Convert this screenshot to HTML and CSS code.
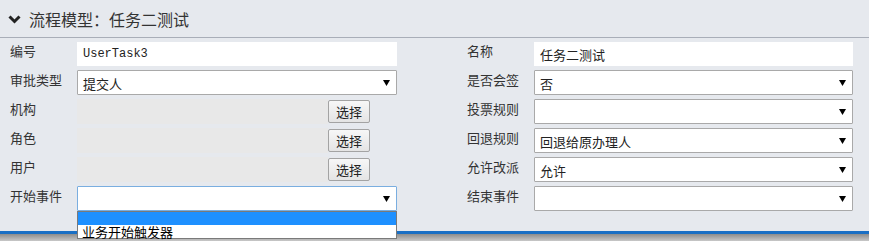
FILE: index.html
```html
<!DOCTYPE html>
<html lang="zh">
<head>
<meta charset="utf-8">
<link rel="stylesheet" href="styles.css">
</head>
<body>
<div class="panel">
  <div class="header">
    <svg class="chev" width="13" height="9" viewBox="0 0 13 9"><polyline points="1.5,1.5 6.5,6.5 11.5,1.5" fill="none" stroke="#222" stroke-width="3"/></svg>
    <span class="title">流程模型：任务二测试</span>
  </div>
  <div class="form">
    <div class="label">编号</div>
    <div class="input mono first">UserTask3</div>
    <div class="label right">名称</div>
    <div class="input first">任务二测试</div>

    <div class="label">审批类型</div>
    <div class="select"><span>提交人</span><svg class="arr" width="7" height="6" viewBox="0 0 7 6"><polygon points="0,0 7,0 3.5,6" fill="#000"/></svg></div>
    <div class="label right">是否会签</div>
    <div class="select"><span>否</span><svg class="arr" width="7" height="6" viewBox="0 0 7 6"><polygon points="0,0 7,0 3.5,6" fill="#000"/></svg></div>

    <div class="label">机构</div>
    <div class="pick"><div class="ro"></div><div class="btn">选择</div></div>
    <div class="label right">投票规则</div>
    <div class="select"><span></span><svg class="arr" width="7" height="6" viewBox="0 0 7 6"><polygon points="0,0 7,0 3.5,6" fill="#000"/></svg></div>

    <div class="label">角色</div>
    <div class="pick"><div class="ro"></div><div class="btn">选择</div></div>
    <div class="label right">回退规则</div>
    <div class="select"><span>回退给原办理人</span><svg class="arr" width="7" height="6" viewBox="0 0 7 6"><polygon points="0,0 7,0 3.5,6" fill="#000"/></svg></div>

    <div class="label">用户</div>
    <div class="pick"><div class="ro"></div><div class="btn">选择</div></div>
    <div class="label right">允许改派</div>
    <div class="select"><span>允许</span><svg class="arr" width="7" height="6" viewBox="0 0 7 6"><polygon points="0,0 7,0 3.5,6" fill="#000"/></svg></div>

    <div class="label">开始事件</div>
    <div class="select focus"><span></span><svg class="arr" width="7" height="6" viewBox="0 0 7 6"><polygon points="0,0 7,0 3.5,6" fill="#000"/></svg>
      <div class="dropdown">
        <div class="opt hl"></div>
        <div class="opt">业务开始触发器</div>
      </div>
    </div>
    <div class="label right">结束事件</div>
    <div class="select"><span></span><svg class="arr" width="7" height="6" viewBox="0 0 7 6"><polygon points="0,0 7,0 3.5,6" fill="#000"/></svg></div>
  </div>
  <div class="footer"></div>
</div>
</body>
</html>
```
FILE: styles.css
```css
* { box-sizing: border-box; }
html, body { margin: 0; padding: 0; }
body {
  width: 869px;
  height: 241px;
  overflow: hidden;
  background: #e6e9ee;
  font-family: "Noto Sans CJK SC", "Noto Sans", sans-serif;
  color: #222;
}
.panel { background: #e6e9ee; }
.header {
  height: 38px;
  border-bottom: 1px solid #a9aeb8;
  display: flex;
  align-items: center;
  padding-left: 8px;
}
.chev { margin-right: 8px; margin-top: 1px; }
.title { font-size: 16px; line-height: 20px; color: #333; }
.form {
  display: grid;
  grid-template-columns: 77px 320px 137px 319px;
  grid-auto-rows: 25px;
  row-gap: 4px;
  padding-top: 3px;
  height: 193px;
}
.label {
  font-size: 13px;
  line-height: 18px;
  padding-left: 10px;
  color: #333;
  padding-top: 1px;
}
.label.right { padding-left: 70px; }
.first { margin-top: 1px; }
.input {
  background: #fff;
  border: 1px solid #fff;
  font-size: 13px;
  line-height: 23px;
  padding-left: 5px;
  color: #222;
}
.mono { font-family: "Liberation Mono", "DejaVu Sans Mono", monospace; font-size: 12px; }
.select {
  position: relative;
  background: #fff;
  border: 1px solid #a9a9a9;
  border-radius: 1px;
  display: flex;
  align-items: center;
  justify-content: space-between;
  padding: 0 6px 0 5px;
  font-size: 13px;
  color: #222;
}
.select span { line-height: 23px; padding-top: 1px; }
.select.focus { border-color: #7aaee0; }
.pick { display: flex; align-items: flex-start; }
.ro { width: 251px; height: 25px; background: #e8e8e8; }
.btn {
  width: 42px;
  height: 23px;
  margin-top: 1px;
  border: 1px solid #a3a3a3;
  border-radius: 2px;
  background: linear-gradient(#f7f7f7, #e4e4e4);
  font-size: 13px;
  line-height: 21px;
  text-align: center;
  color: #222;
}
.dropdown {
  position: absolute;
  left: -1px;
  top: 24px;
  width: 320px;
  border: 1px solid #7a7a7a;
  background: #fff;
  z-index: 5;
}
.opt { height: 13px; font-size: 13px; line-height: 13px; padding-left: 4px; color: #000; }
.opt.hl { background: #1e90ff; height: 13px; }
.footer {
  height: 10px;
  border-top: 3px solid #1a6fc4;
  background: linear-gradient(#8c8c8c, #c8c8c8);
}
```
